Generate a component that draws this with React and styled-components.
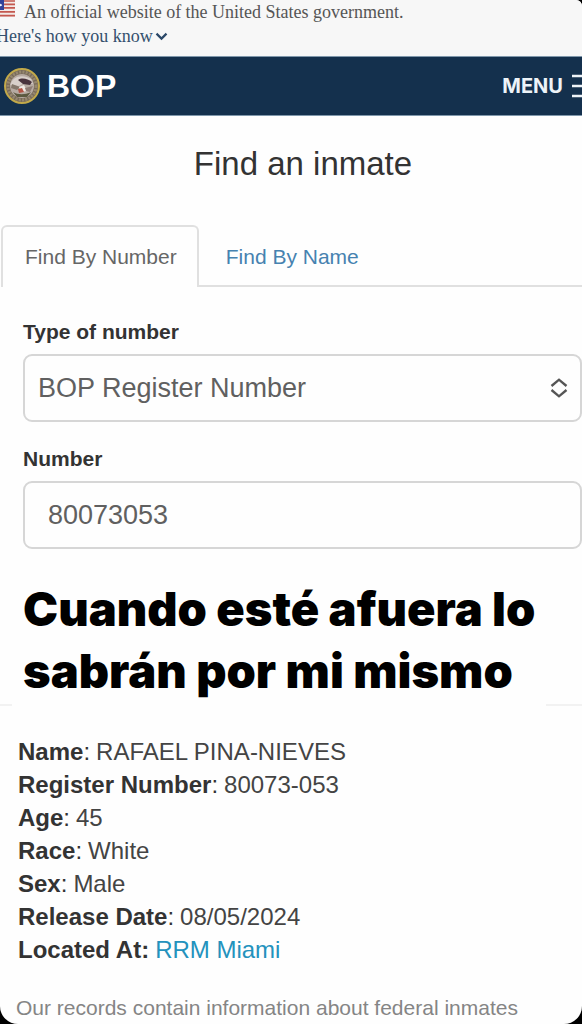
import { useState } from "react";
import styled, { createGlobalStyle } from "styled-components";

const navy = "#14304d";
const lineColor = "#e0e0e0";
const sans = `"Liberation Sans", Arial, sans-serif`;

const GlobalStyle = createGlobalStyle`
    * {
        box-sizing: border-box;
    }
    body {
        margin: 0;
        background-color: #000;
        font-family: ${sans};
        color: #333;
    }
`;

const Page = styled.div`
    min-height: 100vh;
    overflow: hidden;
    background-color: #fefefe;
    border-radius: 0 6px 18px 18px;
`;

const Banner = styled.div`
    padding-bottom: 8px;
    background-color: #f7f7f7;
    font-family: "Liberation Serif", "Times New Roman", serif;
    font-size: 18px;
    line-height: 24px;
    color: #555;
`;

const BannerRow = styled.div`
    display: flex;
    align-items: center;
    gap: 9px;
    & > svg {
        align-self: flex-start;
    }
`;

const KnowButton = styled.button`
    display: flex;
    align-items: center;
    gap: 2px;
    margin-left: -4px;
    padding: 0;
    border: none;
    background: none;
    font: inherit;
    color: #34506d;
`;

const Header = styled.header`
    display: flex;
    align-items: center;
    justify-content: space-between;
    height: 60px;
    padding-left: 3px;
    border-top: 1px solid #7f97ab;
    border-bottom: 1px solid #7f97ab;
    background-color: ${navy};
    color: #fff;
`;

const Brand = styled.a`
    display: flex;
    align-items: center;
    gap: 6px;
    font-size: 32px;
    font-weight: bold;
    color: inherit;
    text-decoration: none;
`;

const MenuButton = styled.button`
    display: flex;
    align-items: center;
    gap: 9px;
    padding: 0;
    border: none;
    background: none;
    font-family: Inter, sans-serif;
    font-size: 20px;
    font-weight: 700;
    color: #edf3f8;
`;

const Title = styled.h1`
    margin: 28px 24px 41px 48px;
    font-size: 33px;
    font-weight: normal;
    line-height: 40px;
    text-align: center;
`;

const Tabs = styled.div`
    display: flex;
    gap: 3px;
    margin-left: 1px;
    border-bottom: 2px solid ${lineColor};
`;

const Tab = styled.button`
    height: 62px;
    margin-bottom: -2px;
    padding: 0 20px 0 22px;
    border: 2px solid ${({ $active }) => ($active ? lineColor : "transparent")};
    border-bottom: none;
    border-radius: 6px 6px 0 0;
    background-color: ${({ $active }) => ($active ? "#fefefe" : "transparent")};
    font-family: ${sans};
    font-size: 21px;
    color: ${({ $active }) => ($active ? "#666" : "#4682b0")};
`;

const Form = styled.form`
    display: flex;
    flex-direction: column;
    gap: 25px;
    padding: 33px 0 0 23px;
`;

const Field = styled.div`
    display: flex;
    flex-direction: column;
    gap: 10px;
`;

const Label = styled.label`
    font-size: 21px;
    font-weight: bold;
    line-height: 24px;
`;

const SelectWrap = styled.div`
    position: relative;
    & > svg {
        position: absolute;
        top: 24px;
        right: 14px;
        pointer-events: none;
    }
`;

const Control = styled.input`
    width: 100%;
    height: 68px;
    padding: 0 ${({ $inset }) => $inset}px;
    border: 2px solid #d6d6d6;
    border-radius: 9px;
    appearance: none;
    background-color: #fefefe;
    font-family: ${sans};
    font-size: 27px;
    color: #606060;
`;

const Caption = styled.h2`
    margin: 29px 24px 2px 23px;
    font-family: Inter, sans-serif;
    font-size: 47px;
    font-weight: 900;
    line-height: 62px;
    color: #000;
`;

const Divider = styled.div`
    display: flex;
    justify-content: space-between;
`;

const Line = styled.span`
    width: ${({ $width }) => $width}px;
    height: 2px;
    background-color: #f2f2f2;
`;

const Details = styled.dl`
    margin: 29px 18px 28px;
    font-size: 24px;
    line-height: 33px;
`;

const Detail = styled.div`
    display: flex;
    gap: 6px;
    & dt {
        font-weight: bold;
    }
    & dd {
        margin: 0;
        color: #444;
    }
    & a {
        color: #2492bd;
        text-decoration: none;
    }
`;

const Colon = styled.span`
    font-weight: ${({ $bold }) => ($bold ? "bold" : "normal")};
`;

const Footnote = styled.p`
    margin: 0 16px;
    font-size: 21px;
    line-height: 28px;
    color: #858585;
`;

const Flag = () => (
    <svg width="15" height="17" viewBox="0 0 15 17" aria-hidden="true">
        <rect width="15" height="17" fill="#f3e9e6" />
        <path d="M0 1h15M0 4.4h15M0 7.8h15M0 11.8h15M0 15.6h15" stroke="#c4584f" strokeWidth="1.7" />
        <rect width="4" height="10" fill="#33439a" />
        <path d="M0 3.5l1 .9 1-.4-.4 1 .6 1-1.2-.2-1 .8z" fill="#fff" />
    </svg>
);

const Chevron = () => (
    <svg width="13" height="9" viewBox="0 0 13 9" fill="none" aria-hidden="true">
        <path d="M1.500 1.600L6.500 6.600L11.500 1.600" stroke="#2b4868" strokeWidth="2.200" />
    </svg>
);

const Seal = () => (
    <svg width="38" height="38" viewBox="0 0 38 38" aria-hidden="true">
        <circle cx="19" cy="19" r="17" fill="#77695a" stroke="#c2a94a" strokeWidth="2" />
        <circle cx="19" cy="19" r="14" fill="none" stroke="#96886f" strokeWidth="3" strokeDasharray="2 1.300" />
        <circle cx="19" cy="19" r="12" fill="#b6aaa2" />
        <path d="M7.500 18C9 9 20 7 28 12L30 17L21 16L16 19Z" fill="#d8cfca" />
        <path d="M15 13C19 10 25 12 29 15L27 18L20 17Z" fill="#49343d" />
        <path d="M9 17L17 20L14 23L8 21Z" fill="#84776b" />
        <path d="M16 20L21 18L24 24L18 25Z" fill="#f0e9e3" />
        <path d="M15 22L19 21L21 25L16 26Z" fill="#b45445" />
        <path d="M22 21L30 19L27 25L23 24Z" fill="#8e7d75" />
        <path d="M10 25C15 28 22 28 28 25L24 30L14 30Z" fill="#5c5940" />
    </svg>
);

const Bars = () => (
    <svg width="10" height="24" viewBox="0 0 10 24" aria-hidden="true">
        <path d="M0 2h10M0 12h10M0 22h10" stroke="#edf3f8" strokeWidth="2.600" />
    </svg>
);

const UpDown = () => (
    <svg width="18" height="20" viewBox="0 0 18 20" fill="none" aria-hidden="true">
        <path d="M1.500 8L9 1.700L16.500 8M1.500 12L9 18.300L16.500 12" stroke="#555" strokeWidth="2.400" />
    </svg>
);

const details = [
    { term: "Name", value: "RAFAEL PINA-NIEVES" },
    { term: "Register Number", value: "80073-053" },
    { term: "Age", value: "45" },
    { term: "Race", value: "White" },
    { term: "Sex", value: "Male" },
    { term: "Release Date", value: "08/05/2024" },
    { term: "Located At", value: "RRM Miami", href: "#rrm-miami" },
];

const App = () => {
    const [tab, setTab] = useState(0);
    const [number, setNumber] = useState("80073053");
    return (
        <>
            <GlobalStyle />
            <Page>
                <Banner>
                    <BannerRow>
                        <Flag />
                        <span>An official website of the United States government.</span>
                    </BannerRow>
                    <KnowButton type="button">
                        Here's how you know
                        <Chevron />
                    </KnowButton>
                </Banner>
                <Header>
                    <Brand href="#home">
                        <Seal />
                        BOP
                    </Brand>
                    <MenuButton type="button">
                        MENU
                        <Bars />
                    </MenuButton>
                </Header>
                <main>
                    <Title>Find an inmate</Title>
                    <Tabs role="tablist">
                        {["Find By Number", "Find By Name"].map((text, id) => (
                            <Tab
                                key={text}
                                type="button"
                                role="tab"
                                aria-selected={tab === id}
                                $active={tab === id}
                                onClick={() => setTab(id)}
                            >
                                {text}
                            </Tab>
                        ))}
                    </Tabs>
                    <Form>
                        <Field>
                            <Label htmlFor="type">Type of number</Label>
                            <SelectWrap>
                                <Control as="select" id="type" $inset={13}>
                                    <option>BOP Register Number</option>
                                </Control>
                                <UpDown />
                            </SelectWrap>
                        </Field>
                        <Field>
                            <Label htmlFor="number">Number</Label>
                            <Control
                                id="number"
                                type="text"
                                $inset={23}
                                value={number}
                                onChange={(e) => setNumber(e.target.value)}
                            />
                        </Field>
                    </Form>
                    <Caption>Cuando esté afuera lo sabrán por mi mismo</Caption>
                    <Divider>
                        <Line $width={12} />
                        <Line $width={36} />
                    </Divider>
                    <Details>
                        {details.map(({ term, value, href }) => (
                            <Detail key={term}>
                                <dt>
                                    {term}
                                    <Colon $bold={Boolean(href)}>:</Colon>
                                </dt>
                                <dd>{href ? <a href={href}>{value}</a> : value}</dd>
                            </Detail>
                        ))}
                    </Details>
                    <Footnote>Our records contain information about federal inmates</Footnote>
                </main>
            </Page>
        </>
    );
};

export default App;
